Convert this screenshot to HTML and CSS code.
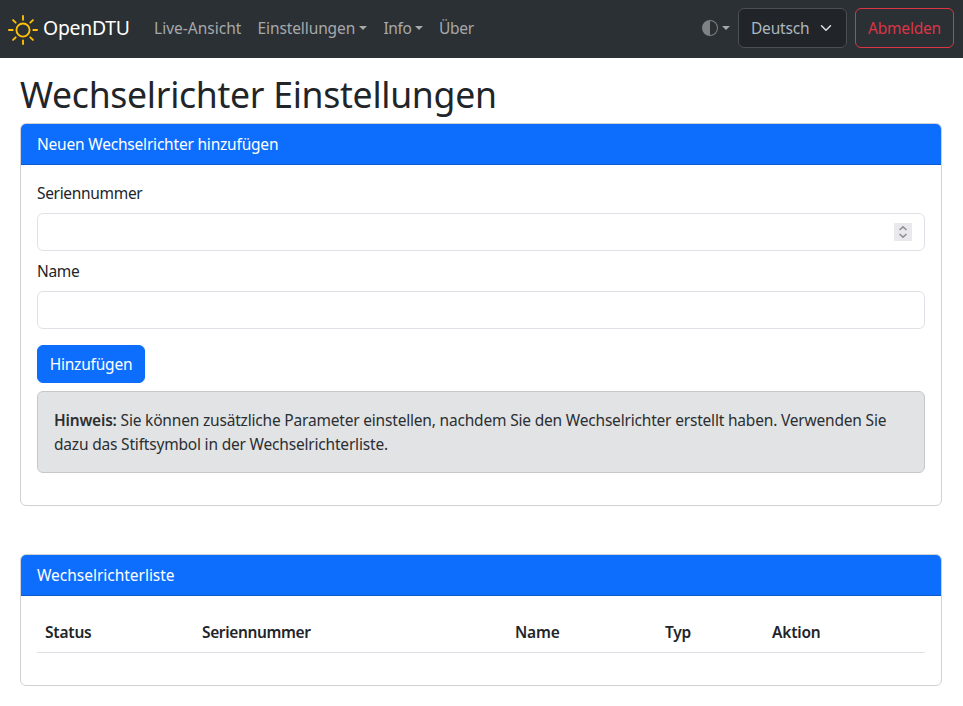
FILE: index.html
```html
<!DOCTYPE html>
<html lang="de">
<head>
<meta charset="utf-8">
<title>OpenDTU</title>
<link rel="stylesheet" href="styles.css">
</head>
<body>
<nav class="navbar">
  <a class="brand"><svg class="sun" viewBox="0 0 16 16" width="30" height="30" fill="currentColor"><path d="M8 11a3 3 0 1 1 0-6 3 3 0 0 1 0 6zm0 1a4 4 0 1 0 0-8 4 4 0 0 0 0 8zM8 0a.5.5 0 0 1 .5.5v2a.5.5 0 0 1-1 0v-2A.5.5 0 0 1 8 0zm0 13a.5.5 0 0 1 .5.5v2a.5.5 0 0 1-1 0v-2A.5.5 0 0 1 8 13zm8-5a.5.5 0 0 1-.5.5h-2a.5.5 0 0 1 0-1h2a.5.5 0 0 1 .5.5zM3 8a.5.5 0 0 1-.5.5h-2a.5.5 0 0 1 0-1h2A.5.5 0 0 1 3 8zm10.657-5.657a.5.5 0 0 1 0 .707l-1.414 1.415a.5.5 0 1 1-.707-.708l1.414-1.414a.5.5 0 0 1 .707 0zm-9.193 9.193a.5.5 0 0 1 0 .707L3.05 13.657a.5.5 0 0 1-.707-.707l1.414-1.414a.5.5 0 0 1 .707 0zm9.193 2.121a.5.5 0 0 1-.707 0l-1.414-1.414a.5.5 0 0 1 .707-.707l1.414 1.414a.5.5 0 0 1 0 .707zM4.464 4.465a.5.5 0 0 1-.707 0L2.343 3.05a.5.5 0 1 1 .707-.707l1.414 1.414a.5.5 0 0 1 0 .708z"/></svg><span class="brand-name">OpenDTU</span></a>
  <div class="links">
    <a class="link live">Live-Ansicht</a>
    <a class="link caret settings">Einstellungen</a>
    <a class="link caret info">Info</a>
    <a class="link about">Über</a>
  </div>
  <a class="theme caret"><svg viewBox="0 0 16 16" width="16" height="16" fill="currentColor"><path d="M8 15A7 7 0 1 0 8 1v14zm0 1A8 8 0 1 1 8 0a8 8 0 0 1 0 16z"/></svg></a>
  <div class="locale"><span>Deutsch</span><svg viewBox="0 0 16 16" width="12" height="12" fill="none" stroke="#dee2e6" stroke-width="2" stroke-linecap="round" stroke-linejoin="round"><path d="m2 5 6 6 6-6"/></svg></div>
  <button class="logout" type="button">Abmelden</button>
</nav>
<main class="page">
  <h1>Wechselrichter Einstellungen</h1>
  <section class="card add">
    <h2 class="card-header">Neuen Wechselrichter hinzufügen</h2>
    <form class="card-body">
      <label for="serial">Seriennummer</label>
      <div class="field">
        <input id="serial" type="text">
        <svg class="spin" viewBox="0 0 18 18" width="18" height="18" fill="none" stroke="#8f8f9d" stroke-width="1.6"><path d="M5.5 7 9 3.8 12.500 7M5.500 11 9 14.200 12.500 11"/></svg>
      </div>
      <label for="name">Name</label>
      <div class="field"><input id="name" type="text"></div>
      <button class="submit" type="button">Hinzufügen</button>
      <div class="hint"><b>Hinweis:</b> Sie können zusätzliche Parameter einstellen, nachdem Sie den Wechselrichter erstellt haben. Verwenden Sie dazu das Stiftsymbol in der Wechselrichterliste.</div>
    </form>
  </section>
  <section class="card list">
    <h2 class="card-header">Wechselrichterliste</h2>
    <div class="card-body">
      <table>
        <colgroup><col class="c-status"><col class="c-serial"><col class="c-name"><col class="c-type"><col></colgroup>
        <thead><tr><th>Status</th><th class="th-serial">Seriennummer</th><th>Name</th><th>Typ</th><th>Aktion</th></tr></thead>
      </table>
    </div>
  </section>
</main>
</body>
</html>
```
FILE: styles.css
```css
* { box-sizing: border-box; }
body {
  margin: 0;
  background: #fff;
  color: #212529;
  font: 400 15.5px/24px "Noto Sans", "Liberation Sans", sans-serif;
  letter-spacing: -0.2px;
}
.navbar {
  display: flex;
  align-items: center;
  height: 58px;
  padding: 0 9px 2px 8px;
  background: #2b3035;
  color: #a6a8aa;
}
.brand {
  display: flex;
  align-items: center;
  gap: 5px;
  width: 138px;
  color: #fff;
  font-size: 19.4px;
  line-height: 30px;
  letter-spacing: -0.25px;
}
.sun { color: #ffc107; margin-top: 3px; }
.links { display: flex; flex: 1; }
.link { padding: 8px; white-space: nowrap; }
.live { width: 104px; letter-spacing: 0.02px; }
.settings { width: 125.5px; padding-left: 7.5px; letter-spacing: -0.1px; }
.info { width: 55.5px; letter-spacing: -0.4px; }
.about { letter-spacing: -0.25px; }
.caret::after {
  content: "";
  display: inline-block;
  margin-left: 4px;
  vertical-align: 4px;
  border-top: 4.8px solid;
  border-left: 4.8px solid transparent;
  border-right: 4.8px solid transparent;
}
.theme { display: flex; align-items: center; margin-right: 8px; color: #a6a8aa; }
.theme svg { color: #7f8285; }
.locale {
  display: flex;
  align-items: center;
  justify-content: space-between;
  width: 109px;
  height: 40px;
  margin-right: 8px;
  padding: 0 14px 0 12px;
  border: 1px solid #495057;
  border-radius: 6px;
  background: #212529;
  color: #adb5bd;
}
button { font: inherit; letter-spacing: inherit; border-radius: 6px; padding: 0; white-space: nowrap; }
.logout {
  width: 99px;
  height: 40px;
  border: 1px solid #dc3545;
  background: transparent;
  color: #dc3545;
}
.page { padding: 14px 21px 0 20px; }
h1 { margin: 0 0 6px; font-weight: 400; font-size: 35.6px; line-height: 45px; letter-spacing: -0.29px; white-space: nowrap; }
.card { border: 1px solid #d0d1d2; border-radius: 6px; overflow: hidden; }
.add { height: 383px; }
.list { height: 132px; margin-top: 48px; }
.card-header {
  margin: 0;
  height: 41px;
  padding: 8px 16px;
  border-bottom: 1px solid #0b5ac8;
  background: #0d6efd;
  color: #fff;
  font: inherit;
}
.list .card-header { letter-spacing: -0.02px; }
.card-body { padding: 16px; }
label { display: block; margin-bottom: 8px; letter-spacing: -0.32px; }
.field { position: relative; height: 38px; margin-bottom: 8px; }
input {
  display: block;
  width: 100%;
  height: 38px;
  padding: 6px 12px;
  border: 1px solid #dee2e6;
  border-radius: 6px;
  font: inherit;
}
.spin { position: absolute; right: 13px; top: 10px; background: #e9e9ed; }
.submit {
  display: block;
  width: 108px;
  height: 38px;
  margin: 16px 0 8px;
  border: 1px solid #0d6efd;
  background: #0d6efd;
  color: #fff;
}
.hint {
  height: 82px;
  padding: 16px;
  border: 1px solid #c4c8cb;
  border-radius: 6px;
  background: #e2e3e5;
  color: #2b2f32;
  letter-spacing: -0.19px;
}
.hint b { font-weight: 600; }
table { width: 100%; border-collapse: collapse; table-layout: fixed; }
th { padding: 8px; border-bottom: 1px solid #dee2e6; text-align: left; font-weight: 600; }
.th-serial { letter-spacing: -0.36px; }
.c-status { width: 157px; }
.c-serial { width: 313px; }
.c-name { width: 150px; }
.c-type { width: 107px; }
```
